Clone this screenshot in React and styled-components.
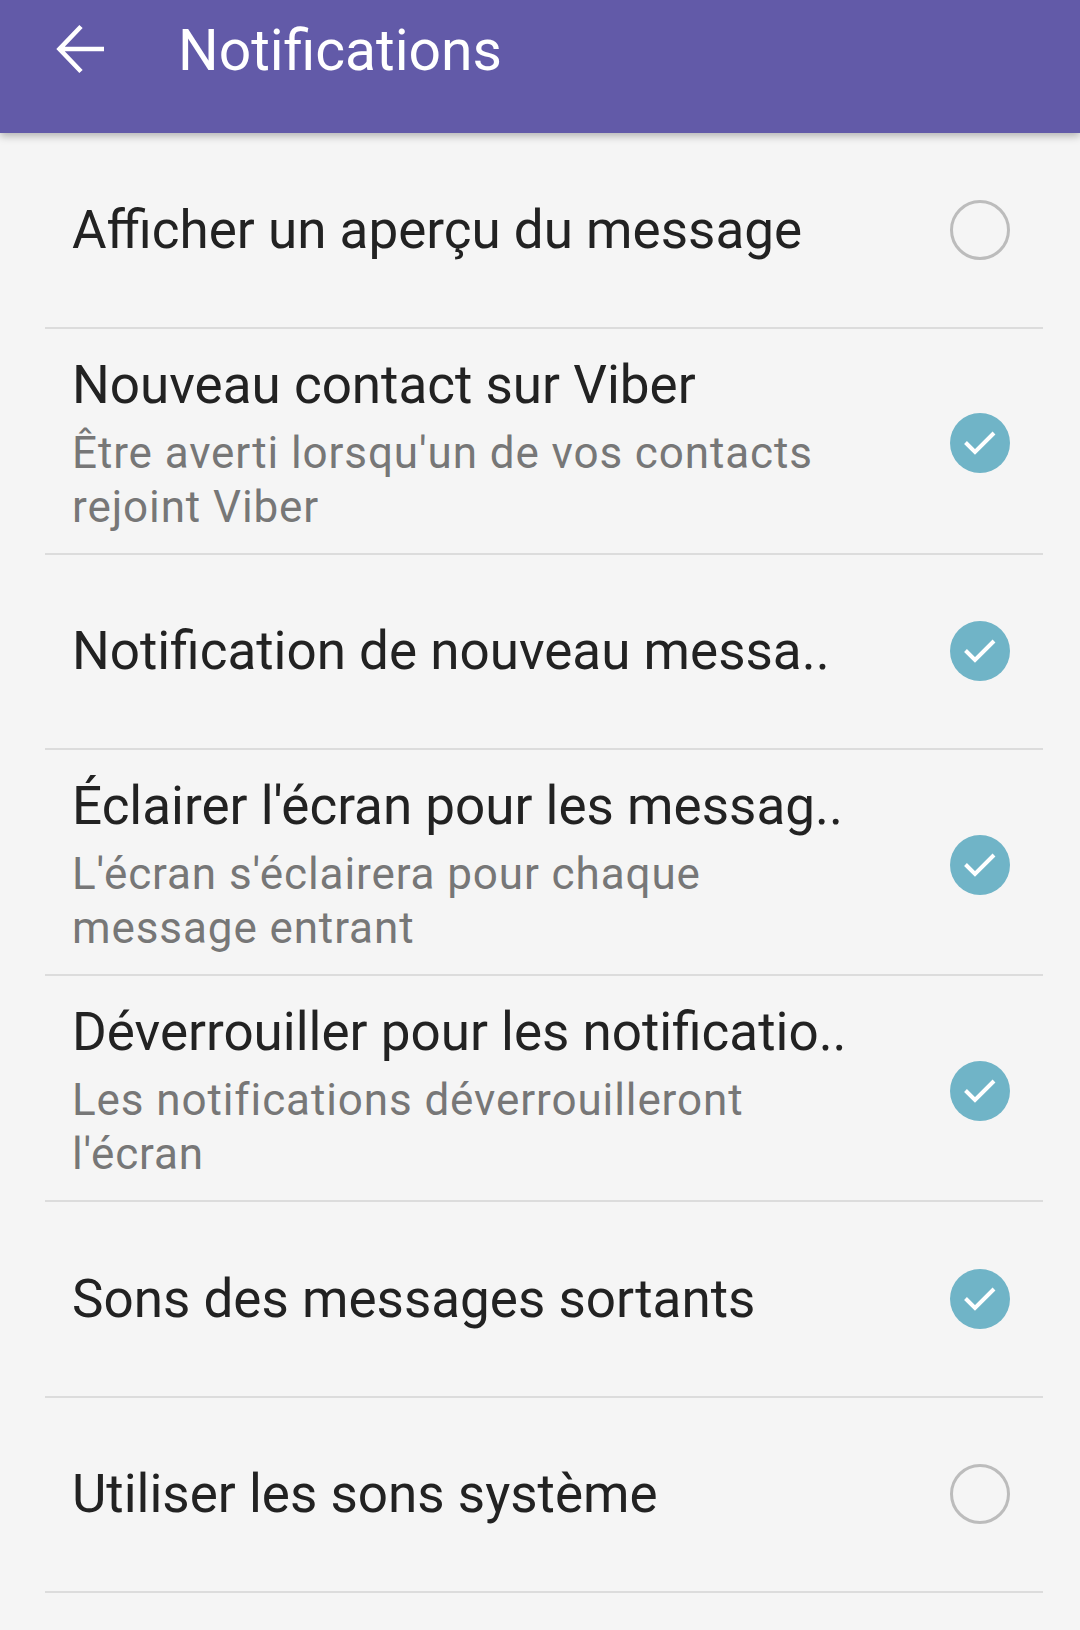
import React from "react";
import styled, { createGlobalStyle } from "styled-components";

const GlobalStyle = createGlobalStyle`
  html, body {
    margin: 0;
    padding: 0;
    background: #f5f5f5;
  }
  body {
    font-family: Roboto, "Noto Sans", "Liberation Sans", sans-serif;
    -webkit-font-smoothing: antialiased;
  }
`;

const settings = [
  { title: "Afficher un aperçu du message", checked: false },
  {
    title: "Nouveau contact sur Viber",
    desc: "Être averti lorsqu'un de vos contacts rejoint Viber",
    checked: true,
  },
  { title: "Notification de nouveau messa..", checked: true },
  {
    title: "Éclairer l'écran pour les messag..",
    desc: "L'écran s'éclairera pour chaque message entrant",
    checked: true,
  },
  {
    title: "Déverrouiller pour les notificatio..",
    desc: "Les notifications déverrouilleront l'écran",
    checked: true,
  },
  { title: "Sons des messages sortants", checked: true },
  { title: "Utiliser les sons système", checked: false },
];

const BackArrow = () => (
  <svg width="50" height="52" viewBox="0 0 50 52" fill="none">
    <path
      d="M48 26H4M25 3.5L3.5 26L25 48.5"
      stroke="#fff"
      strokeWidth="4.6"
      strokeLinecap="butt"
      strokeLinejoin="miter"
    />
  </svg>
);

const Check = ({ checked }) =>
  checked ? (
    <CheckBox $checked>
      <svg width="60" height="60" viewBox="0 0 60 60">
        <path
          d="M15.5 29.5L25 39L44 20"
          stroke="#fff"
          strokeWidth="4"
          fill="none"
        />
      </svg>
    </CheckBox>
  ) : (
    <CheckBox />
  );

export default function App() {
  return (
    <>
      <GlobalStyle />
      <Screen>
        <Toolbar>
          <BackButton>
            <BackArrow />
          </BackButton>
          <Title>Notifications</Title>
        </Toolbar>
        <List>
          {settings.map((s) => (
            <Row key={s.title} $tall={!!s.desc}>
              <Texts>
                <RowTitle>{s.title}</RowTitle>
                {s.desc && <RowDesc>{s.desc}</RowDesc>}
              </Texts>
              <Check checked={s.checked} />
            </Row>
          ))}
        </List>
      </Screen>
    </>
  );
}

const Screen = styled.div`
  width: 1080px;
  min-height: 1630px;
  background: #f5f5f5;
  overflow: hidden;
`;

const Toolbar = styled.header`
  position: relative;
  z-index: 1;
  height: 133px;
  background: #625aa8;
  display: flex;
  align-items: center;
  box-shadow: 0 3px 8px rgba(0, 0, 0, 0.28);
`;

const BackButton = styled.div`
  width: 50px;
  height: 52px;
  margin-left: 56px;
  margin-top: -36px;
  display: flex;
`;

const Title = styled.h1`
  margin: -32px 0 0 72px;
  font-size: 57px;
  font-weight: 400;
  color: #fff;
  letter-spacing: 0;
`;

const List = styled.div`
  margin: 0 37px 0 45px;
`;

const Row = styled.div`
  box-sizing: border-box;
  height: ${(p) => (p.$tall ? "226px" : "195.5px")};
  border-bottom: 2px solid #dcdcdc;
  display: flex;
  align-items: center;
  justify-content: space-between;
  padding: ${(p) => (p.$tall ? "5px" : "0")} 33px 0 27px;
`;

const Texts = styled.div`
  display: flex;
  flex-direction: column;
  max-width: 780px;
`;

const RowTitle = styled.div`
  font-size: 53px;
  line-height: 64px;
  color: #222;
  white-space: nowrap;
`;

const RowDesc = styled.div`
  margin-top: 9px;
  font-size: 44px;
  line-height: 54px;
  letter-spacing: 0.9px;
  color: #777;
`;

const CheckBox = styled.div`
  box-sizing: border-box;
  width: 60px;
  height: 60px;
  border-radius: 50%;
  flex-shrink: 0;
  background: ${(p) => (p.$checked ? "#70b4c7" : "transparent")};
  border: ${(p) => (p.$checked ? "none" : "3px solid #bcbcbc")};
  svg {
    display: block;
  }
`;
